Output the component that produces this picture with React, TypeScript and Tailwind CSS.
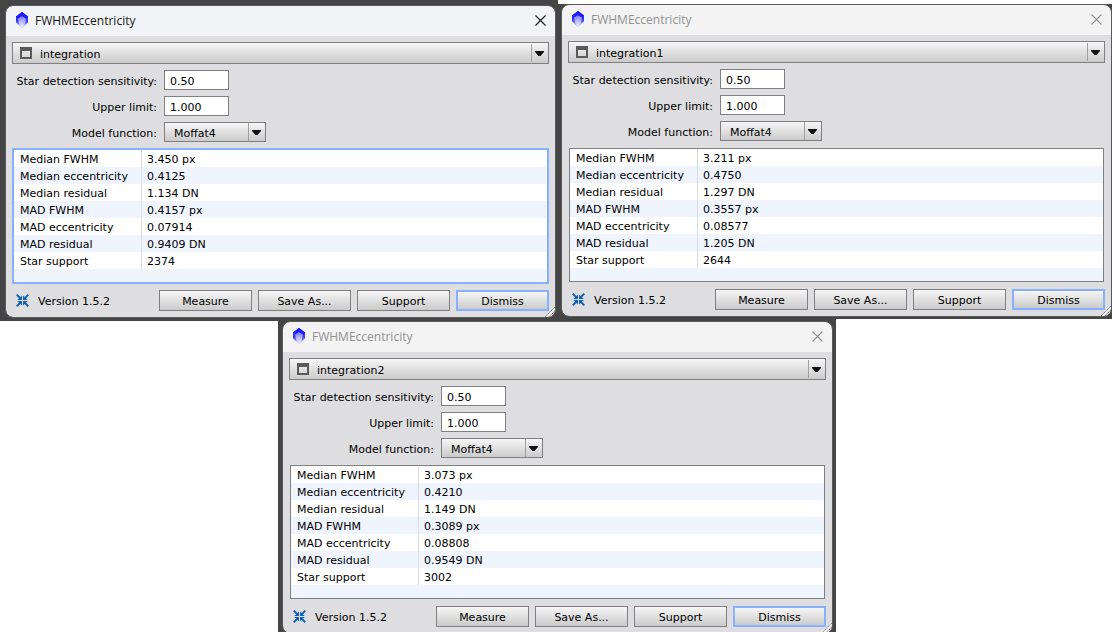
import React, { useId } from "react";

type Measurement = { label: string; value: string };

type DialogData = {
  view: string;
  active?: boolean;
  values: string[];
};

const LABELS = [
  "Median FWHM",
  "Median eccentricity",
  "Median residual",
  "MAD FWHM",
  "MAD eccentricity",
  "MAD residual",
  "Star support",
];

const FIRST: DialogData = {
  view: "integration",
  active: true,
  values: ["3.450 px", "0.4125", "1.134 DN", "0.4157 px", "0.07914", "0.9409 DN", "2374"],
};
const SECOND: DialogData = {
  view: "integration1",
  values: ["3.211 px", "0.4750", "1.297 DN", "0.3557 px", "0.08577", "1.205 DN", "2644"],
};
const THIRD: DialogData = {
  view: "integration2",
  values: ["3.073 px", "0.4210", "1.149 DN", "0.3089 px", "0.08808", "0.9549 DN", "3002"],
};

function CrystalIcon() {
  const id = useId();
  return (
    <svg width="14" height="16" viewBox="0 0 14 16" aria-hidden="true">
      <defs>
        <linearGradient id={id + "o"} x1="0" y1="0" x2="0" y2="1">
          <stop offset="0" stopColor="#1010ff" />
          <stop offset=".55" stopColor="#3a3af4" />
          <stop offset="1" stopColor="#d8d8fc" />
        </linearGradient>
        <linearGradient id={id + "i"} x1="0" y1="0" x2="0" y2="1">
          <stop offset="0" stopColor="#6a6aff" />
          <stop offset=".5" stopColor="#b8b8fc" />
          <stop offset="1" stopColor="#eeeeff" />
        </linearGradient>
      </defs>
      <path d="M7 0 13 4.500V10.500L7 16 1 10.500V4.500Z" fill={"url(#" + id + "o)"} />
      <path d="M7 3.500 11 6.500 9.500 13 7 15.500 4.500 13 3 6.500Z" fill={"url(#" + id + "i)"} />
      <path d="M7 0 13 4.500 11 6.500 7 4 3 6.500 1 4.500Z" fill="#1c1cff" />
    </svg>
  );
}

function CloseIcon() {
  return (
    <svg width="11" height="11" viewBox="0 0 11 11" aria-hidden="true">
      <path d="M.5.5l10 10M10.500.5l-10 10" stroke="currentColor" strokeWidth="1.100" fill="none" />
    </svg>
  );
}

function ContractIcon() {
  return (
    <svg width="13" height="13" viewBox="0 0 13 13" aria-hidden="true">
      <path d="M.7.7 5 5M12.300.7 8 5M.7 12.300 5 8M12.300 12.300 8 8" fill="none" stroke="#0f5fb4" strokeWidth="1.900" />
      <path d="M6 1.500V6H1.200L3 4.500 4.500 3ZM7 1.500V6h4.800L10 4.500 8.500 3ZM6 11.500V7H1.200L3 8.500 4.500 10ZM7 11.500V7h4.800L10 8.500 8.500 10Z" fill="#0f5fb4" />
    </svg>
  );
}

function DropArrow() {
  return (
    <span className="pointer-events-none col-start-1 row-start-1 flex h-[18px] w-[18px] items-center self-center justify-self-end border-l border-[#a0a0a0] pl-[3px]">
      <svg width="9" height="5" viewBox="0 0 9 5" aria-hidden="true">
        <path d="M0 0h9v1L5.500 5h-2L0 1Z" fill="#111" />
      </svg>
    </span>
  );
}

function ResultTable({ rows, active }: { rows: Measurement[]; active?: boolean }) {
  return (
    <div className={active ? "border-2 border-[#86b1ff] bg-[#f0f4ff] pb-[13px]" : "m-px border border-[#808080] bg-[#f0f4ff] pb-[13px]"}>
      <table className="w-full border-separate border-spacing-0 leading-[15px]">
        <tbody>
          {rows.map((row) => (
            <tr key={row.label} className="odd:bg-white even:bg-[#f0f4ff]">
              <th scope="row" className="w-32 border-r border-[#dcdcdc] p-0 pt-0.5 pl-1.5 text-left font-normal">
                {row.label}
              </th>
              <td className="p-0 pt-0.5 pl-[5px]">{row.value}</td>
            </tr>
          ))}
        </tbody>
      </table>
    </div>
  );
}

const BUTTON = "h-[21px] w-[93px] bg-linear-to-b from-[#f6f6f6] to-[#cbcbcb] pt-px";
const FIELD = "h-5 w-[65px] border border-[#808080] bg-white pt-0.5 pl-[5px]";
const FIELD_LABEL = "pt-0.5 pr-px text-right whitespace-nowrap";

function EccentricityDialog({ data }: { data: DialogData }) {
  const id = useId();
  const rows = LABELS.map((label, i) => ({ label, value: data.values[i] }));
  return (
    <section className="relative overflow-hidden rounded-[7px] bg-[#dedee0] font-['DejaVu_Sans',Verdana,sans-serif] text-[11px] leading-[17px] text-black outline-1 outline-[#5a5a5a]">
      <header
        className={
          data.active
            ? "flex h-[30px] items-center bg-[#f1f3f6] px-[9px] text-[#1a1a1a]"
            : "flex h-[30px] items-center bg-[#f3f3f3] px-[9px] text-[#929292]"
        }
      >
        <span className="pb-0.5">
          <CrystalIcon />
        </span>
        <h2 className="ml-1.5 flex-1 font-['Open_Sans','Noto_Sans',sans-serif] text-xs">FWHMEccentricity</h2>
        <button type="button" aria-label="Close" className="pb-0.5">
          <CloseIcon />
        </button>
      </header>

      <div className="flex flex-col gap-1.5 p-1.5">
        <div className="grid items-center">
          <select
            aria-label="View"
            defaultValue={data.view}
            className="col-start-1 row-start-1 h-[22px] w-full appearance-none border border-[#808080] bg-linear-to-b from-[#f6f6f6] to-[#cbcbcb] pt-0.5 pl-[27px]"
          >
            <option>{data.view}</option>
          </select>
          <svg className="pointer-events-none col-start-1 row-start-1 ml-2" width="12" height="12" viewBox="0 0 12 12" aria-hidden="true">
            <path d="M0 0h12v12H0ZM2 4v6h8V4Z" fill="#5a5a5a" fillRule="evenodd" />
          </svg>
          <DropArrow />
        </div>

        <div className="grid grid-cols-[146px_auto] auto-rows-[20px] items-center justify-start gap-1.5">
          <label htmlFor={id + "s"} className={FIELD_LABEL}>
            Star detection sensitivity:
          </label>
          <input id={id + "s"} defaultValue="0.50" className={FIELD} />
          <label htmlFor={id + "u"} className={FIELD_LABEL}>
            Upper limit:
          </label>
          <input id={id + "u"} defaultValue="1.000" className={FIELD} />
          <label htmlFor={id + "m"} className={FIELD_LABEL}>
            Model function:
          </label>
          <div className="grid w-[102px] items-center">
            <select
              id={id + "m"}
              className="col-start-1 row-start-1 h-5 w-full appearance-none border border-[#808080] bg-linear-to-b from-[#f6f6f6] to-[#cbcbcb] pt-0.5 pl-[9px]"
            >
              <option>Moffat4</option>
            </select>
            <DropArrow />
          </div>
        </div>

        <ResultTable rows={rows} active={data.active} />

        <footer className="flex items-center gap-1.5">
          <span className="ml-1">
            <ContractIcon />
          </span>
          <span className="ml-[3px] flex-1 pt-px">Version 1.5.2</span>
          <button type="button" className={BUTTON + " border border-[#808080]"}>
            Measure
          </button>
          <button type="button" className={BUTTON + " border border-[#808080]"}>
            Save As...
          </button>
          <button type="button" className={BUTTON + " border border-[#808080]"}>
            Support
          </button>
          <button type="button" className={BUTTON + " border-2 border-[#86b1ff]"}>
            Dismiss
          </button>
        </footer>
      </div>

      <svg className="absolute right-0 bottom-0" width="10" height="10" viewBox="0 0 10 10" aria-hidden="true">
        <path d="M0 10 10 0M4 10l6-6M8 10l2-2" stroke="#777" strokeWidth="1" strokeDasharray="1.400 .7" />
        <path d="M1.500 10 10 1.500M5.500 10 10 5.500" stroke="#fff" strokeWidth="1" />
      </svg>
    </section>
  );
}

export default function App() {
  return (
    <main className="h-screen overflow-hidden bg-white">
      <div className="grid grid-cols-[558fr_554fr] items-start">
        <div className="bg-[#454545] pt-1.5 pr-[3px] pb-1 pl-1.5">
          <EccentricityDialog data={FIRST} />
        </div>
        <div className="mt-1 bg-[#454545] pt-px pr-px pb-[3px] pl-1">
          <EccentricityDialog data={SECOND} />
        </div>
      </div>
      <div className="-mt-0.5 ml-[25%] w-[558px] bg-[#454545] pt-[3px] pr-1 pb-1 pl-[5px]">
        <EccentricityDialog data={THIRD} />
      </div>
    </main>
  );
}
